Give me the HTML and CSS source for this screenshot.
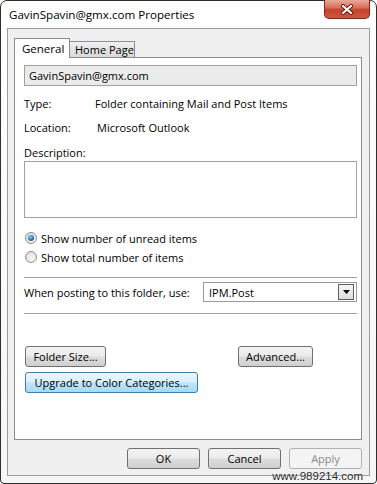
FILE: index.html
```html
<!DOCTYPE html>
<html lang="en">
  <head>
    <meta charset="UTF-8" />
    <meta name="viewport" content="width=device-width, initial-scale=1.0" />
    <title>GavinSpavin@gmx.com Properties</title>
    <link rel="stylesheet" href="styles.css">
  </head>

  <body>
    <div class="window">
      <div class="titlebar">
        <span class="title">GavinSpavin@gmx.com Properties</span>
        <button class="close" aria-label="Close">
          <svg width="14" height="11" viewBox="0 0 14 11">
            <path d="M3 2 L11 9 M11 2 L3 9" stroke="#5a1a10" stroke-width="4" stroke-linecap="round" />
            <path d="M3 2 L11 9 M11 2 L3 9" stroke="#ffffff" stroke-width="2.2" stroke-linecap="round" />
          </svg>
        </button>
      </div>

      <div class="dialog">
        <div class="tabs">
          <div class="tab active">General</div>
          <div class="tab">Home Page</div>
        </div>

        <div class="panel">
          <div class="name-field">GavinSpavin@gmx.com</div>

          <div class="info-row row-type">
            <span class="info-label">Type:</span>
            <span>Folder containing Mail and Post Items</span>
          </div>
          <div class="info-row row-location">
            <span class="info-label">Location:</span>
            <span class="info-shift">Microsoft Outlook</span>
          </div>

          <div class="desc-label">Description:</div>
          <div class="desc-box"></div>

          <label class="radio-row first">
            <span class="radio checked"></span>Show number of unread items
          </label>
          <label class="radio-row">
            <span class="radio"></span>Show total number of items
          </label>

          <div class="separator sep-1"></div>

          <div class="post-row">
            <span>When posting to this folder, use:</span>
            <div class="combo">
              <span>IPM.Post</span>
              <span class="combo-btn">
                <svg width="7" height="4" viewBox="0 0 7 4"><path d="M0 0 H7 L3.5 4 Z" fill="#000" /></svg>
              </span>
            </div>
          </div>

          <div class="separator sep-2"></div>

          <div class="btn-row row-top">
            <button class="btn btn-folder">Folder Size...</button>
            <button class="btn btn-advanced">Advanced...</button>
          </div>
          <div class="btn-row row-bottom">
            <button class="btn btn-default btn-upgrade">Upgrade to Color Categories...</button>
          </div>
        </div>

        <div class="footer-buttons">
          <button class="btn btn-footer">OK</button>
          <button class="btn btn-footer">Cancel</button>
          <button class="btn btn-footer" disabled>Apply</button>
        </div>
      </div>

      <div class="watermark">www.989214.com</div>
    </div>
  </body>
</html>
```

FILE: styles.css
```css
body {
  margin: 0;
  padding: 0;
  font-family: "Open Sans", "Noto Sans", sans-serif;
  font-size: 11px;
  color: #000;
  background-color: #ffffff;
}

.window {
  position: relative;
  width: 377px;
  height: 484px;
  box-sizing: border-box;
  border: 1px solid #2e2e2e;
  border-radius: 7px 7px 4px 4px;
  background: linear-gradient(#ffffff, #f6f6f6);
  padding: 0 6px 7px 6px;
  display: flex;
  flex-direction: column;
  white-space: nowrap;
}

.titlebar {
  height: 27px;
  display: flex;
  align-items: flex-start;
}

.title {
  margin-top: 6px;
  padding-left: 2px;
  font-size: 11.6px;
}

.close {
  margin-left: auto;
  width: 46px;
  height: 19px;
  padding: 0;
  margin-top: -1px;
  border: 1px solid #7d2a1d;
  border-top: none;
  border-radius: 0 0 5px 5px;
  background: linear-gradient(#e9a999 0%, #d8745f 40%, #c4432c 55%, #cc5741 100%);
  display: flex;
  align-items: center;
  justify-content: center;
}

.dialog {
  flex: 1;
  border: 1px solid #9c9c9c;
  background-color: #f0f0f0;
  padding: 9px 7px 6px 6px;
  display: flex;
  flex-direction: column;
}

.tabs {
  display: flex;
  align-items: flex-end;
  height: 20px;
  margin-bottom: -1px;
}

.tab {
  box-sizing: border-box;
  border: 1px solid #898c95;
  border-bottom: none;
  position: relative;
  font-size: 11.5px;
}

.tab.active {
  width: 56px;
  height: 20px;
  background-color: #ffffff;
  padding: 2px 0 0 7px;
  z-index: 1;
}

.tab:not(.active) {
  width: 66px;
  height: 16px;
  margin-bottom: 1px;
  margin-left: -1px;
  padding: 0 0 0 5px;
  font-size: 11px;
  line-height: 16px;
  background: linear-gradient(#f2f2f2, #e3e3e3 50%, #d9d9d9);
}

.panel {
  flex: 1;
  border: 1px solid #898c95;
  background-color: #ffffff;
  padding: 7px 4px 0 9px;
  display: flex;
  flex-direction: column;
}

.name-field {
  height: 21px;
  box-sizing: border-box;
  border: 1px solid #a0a0a0;
  background-color: #ebebeb;
  padding-left: 4px;
  line-height: 19px;
}

.info-row {
  display: flex;
  height: 16px;
  line-height: 16px;
}

.row-type {
  margin-top: 10px;
}

.row-location {
  margin-top: 8px;
}

.info-label {
  width: 71px;
}

.info-shift {
  padding-left: 2px;
}

.desc-label {
  margin-top: 9px;
  height: 16px;
  line-height: 16px;
}

.desc-box {
  height: 57px;
  box-sizing: border-box;
  border: 1px solid #a3a3a3;
  background-color: #ffffff;
}

.radio-row {
  display: flex;
  align-items: center;
  height: 16px;
  margin-top: 3px;
  padding-left: 1px;
}

.radio-row.first {
  margin-top: 12px;
}

.radio {
  width: 12px;
  height: 12px;
  box-sizing: border-box;
  border-radius: 50%;
  border: 1px solid #8f8f8f;
  background: radial-gradient(circle at 60% 65%, #f8f8f8, #d6d6d6);
  margin-right: 4px;
  position: relative;
}

.radio.checked::after {
  content: "";
  position: absolute;
  left: 2px;
  top: 2px;
  width: 6px;
  height: 6px;
  border-radius: 50%;
  background: radial-gradient(circle at 40% 35%, #8ad0f5, #1b6fb0 60%, #0e4b85);
}

.separator {
  height: 1px;
  background-color: #a0a0a0;
}

.sep-1 {
  margin-top: 12px;
}

.sep-2 {
  margin-top: 11px;
}

.post-row {
  display: flex;
  align-items: center;
  justify-content: space-between;
  margin-top: 4px;
  height: 20px;
}

.combo {
  width: 154px;
  height: 20px;
  box-sizing: border-box;
  border: 1px solid #9a9a9a;
  background-color: #ffffff;
  display: flex;
  align-items: center;
  justify-content: space-between;
  padding: 0 2px 0 5px;
}

.combo-btn {
  width: 16px;
  height: 16px;
  box-sizing: border-box;
  border: 1px solid #5f5f5f;
  background: linear-gradient(#f7f7f7, #dcdcdc);
  display: flex;
  align-items: center;
  justify-content: center;
}

.btn {
  height: 21px;
  box-sizing: border-box;
  border: 1px solid #707070;
  border-radius: 3px;
  background: linear-gradient(#f3f3f3 0%, #ebebeb 48%, #dddddd 52%, #cfcfcf 100%);
  font-family: "Open Sans", "Noto Sans", sans-serif;
  font-size: 11px;
  color: #000;
  padding: 0;
}

.btn-row {
  display: flex;
  justify-content: space-between;
  padding-left: 1px;
}

.row-top {
  margin-top: 32px;
  padding-right: 44px;
}

.row-bottom {
  margin-top: 5px;
}

.btn-folder {
  width: 81px;
}

.btn-advanced {
  width: 75px;
}

.btn-upgrade {
  width: 173px;
}

.btn-default {
  border-color: #3c7fb1;
  background: linear-gradient(#eaf6fd 0%, #d9f0fc 48%, #bee6fd 52%, #a7d9f5 100%);
}

.footer-buttons {
  display: flex;
  justify-content: flex-end;
  gap: 8px;
  margin-top: 8px;
}

.btn-footer {
  width: 73px;
}

.btn:disabled {
  border-color: #adb2b5;
  background: #f4f4f4;
  color: #8a8a8a;
}

.watermark {
  position: absolute;
  right: 13px;
  bottom: 1px;
  font-family: "Liberation Sans", Arial, sans-serif;
  font-size: 11.5px;
  color: #2a2a2a;
  text-shadow: 0 0 2px #ffffff;
}
```
